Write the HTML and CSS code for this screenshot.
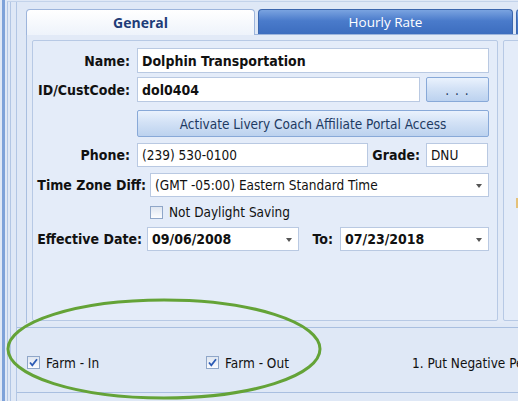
FILE: index.html
```html
<!DOCTYPE html>
<html>
<head>
<meta charset="utf-8">
<link rel="stylesheet" href="styles.css">
</head>
<body>
<div class="screen">
  <div class="strip"></div>
  <div class="frame">
    <div class="frame-in">
      <div class="main">
        <div class="tabctl">
          <div class="tabs">
            <div class="tab active">General</div>
            <div class="tab">Hourly Rate</div>
            <div class="tab stub"></div>
          </div>
          <div class="page">
            <div class="group">
              <div class="row r1">
                <span class="lbl w97">Name:</span>
                <div class="fld bold w352">Dolphin Transportation</div>
              </div>
              <div class="row r2">
                <span class="lbl w97">ID/CustCode:</span>
                <div class="fld bold w283">dol0404</div>
                <div class="btn dots">. . .</div>
              </div>
              <div class="row r3">
                <div class="btn wide">Activate Livery Coach Affiliate Portal Access</div>
              </div>
              <div class="row r4">
                <span class="lbl w97">Phone:</span>
                <div class="fld w231">(239) 530-0100</div>
                <span class="lbl grade">Grade:</span>
                <div class="fld w62">DNU</div>
              </div>
              <div class="row r5">
                <span class="lbl w113">Time Zone Diff:</span>
                <div class="fld combo w339">(GMT -05:00) Eastern Standard Time<span class="arrow"></span></div>
              </div>
              <div class="row r6">
                <span class="chk"></span>
                <span class="chktxt">Not Daylight Saving</span>
              </div>
              <div class="row r7">
                <span class="lbl w109">Effective Date:</span>
                <div class="fld combo bold w152">09/06/2008<span class="arrow"></span></div>
                <span class="lbl to">To:</span>
                <div class="fld combo bold w149">07/23/2018<span class="arrow"></span></div>
              </div>
            </div>
            <div class="group side"><span class="mark"></span></div>
          </div>
        </div>
        <div class="bottom">
          <span class="chk on"><svg viewBox="0 0 13 13" width="13" height="13"><path d="M3 6.5 L5.3 9.3 L10 3.2" fill="none" stroke="#2c5bb5" stroke-width="1.8"/></svg></span>
          <span class="chktxt fin">Farm - In</span>
          <span class="chk on"><svg viewBox="0 0 13 13" width="13" height="13"><path d="M3 6.5 L5.3 9.3 L10 3.2" fill="none" stroke="#2c5bb5" stroke-width="1.8"/></svg></span>
          <span class="chktxt fout">Farm - Out</span>
          <span class="chktxt note">1. Put Negative Pe</span>
        </div>
      </div>
    </div>
  </div>
  <svg class="circle" width="518" height="401" viewBox="0 0 518 401">
    <ellipse cx="164" cy="349" rx="156" ry="49" fill="none" stroke="#64a337" stroke-width="3"/>
  </svg>
</div>
</body>
</html>
```

FILE: styles.css
```css
* { box-sizing: border-box; }
html, body { margin: 0; padding: 0; }
body {
  width: 518px; height: 401px; overflow: hidden;
  background: #dfe8f6;
  font-family: "DejaVu Sans Condensed", "DejaVu Sans", sans-serif;
  font-size: 13.5px;
  color: #111;
}
.screen { position: relative; display: flex; width: 518px; height: 401px; overflow: hidden; }
.strip { width: 3px; margin-left: 2px; background: #7ea2d9; flex: none; }
.frame {
  flex: 1; margin-left: 2px; margin-top: 1px;
  border-left: 1px solid #b2c6e4; border-top: 1px solid #c3d3ea;
  padding-left: 2px;
}
.frame-in { height: 100%; border-left: 1px solid #b2c6e4; padding-left: 5px; }
.main { height: 100%; border-left: 1px solid #b2c6e4; padding-top: 7px; }
.tabctl { margin-left: 9px; }
.tabs { display: flex; height: 25px; }
.tab {
  width: 230px; height: 25px; border-radius: 4px 4px 0 0;
  display: flex; align-items: center; justify-content: center;
  font-family: "Open Sans", "DejaVu Sans", sans-serif; font-size: 13.5px;
  color: #fff;
  background: linear-gradient(#7aa3e0, #4a7bcb 45%, #3c6dbf);
  border: 1px solid #3b66ad; border-bottom: none;
  margin-right: 3px;
}
.tab.active {
  width: 229px; color: #1f3d78; font-weight: bold; font-size: 14px;
  background: linear-gradient(#ffffff, #eef3fb);
  border-color: #9db5dc; margin-right: 3px;
  position: relative; z-index: 1; height: 26px;
}
.tab:nth-child(2) { width: 255px; }
.tab.stub { width: 20px; }
.page {
  display: flex; gap: 5px;
  height: 289px;
  border-top: 1px solid #9db5dc; border-left: 1px solid #a9bfe0;
  padding: 5px 0 0 5px;
  background: #e2eaf7;
}
.group {
  flex: none; width: 466px; height: 281px;
  border: 1px solid #b7c9e5; border-radius: 2px;
  padding: 7px 0 0 0;
  background: #e4ecf9;
}
.group.side { width: 60px; position: relative; }
.mark { position: absolute; left: 12px; top: 157px; width: 4px; height: 10px; background: #e4c17a; }
.row { display: flex; align-items: center; height: 24px; }
.r1 { height: 25px; }
.r2 { height: 25px; margin-top: 4px; }
.r3 { height: 27px; margin-top: 8px; padding-left: 104px; }
.r4 { margin-top: 6px; }
.r5 { margin-top: 6px; }
.r6 { margin-top: 3px; padding-left: 117px; }
.r7 { margin-top: 3px; }
.lbl { font-weight: bold; font-size: 14px; text-align: right; flex: none; white-space: nowrap; }
.w97 { width: 97px; margin-right: 7px; }
.w113 { width: 113px; margin-right: 4px; }
.w109 { width: 109px; margin-right: 5px; }
.grade { width: 52px; margin-right: 6px; }
.to { width: 34px; margin-right: 7px; }
.fld {
  height: 100%; flex: none; position: relative;
  background: #fff; border: 1px solid #b9c9e2;
  display: flex; align-items: center; padding-left: 4px;
  white-space: nowrap; overflow: hidden;
}
.bold { font-weight: bold; font-size: 14px; }
.w352 { width: 352px; }
.w283 { width: 283px; }
.w231 { width: 231px; }
.w62 { width: 62px; }
.w339 { width: 339px; }
.w152 { width: 152px; }
.w149 { width: 149px; }
.arrow {
  position: absolute; right: 6px; top: 10px;
  width: 0; height: 0;
  border-left: 3.5px solid transparent; border-right: 3.5px solid transparent;
  border-top: 4px solid #555;
}
.btn {
  display: flex; align-items: center; justify-content: center;
  background: linear-gradient(#eaf2fd, #d3e2f6 45%, #bcd2ef);
  border: 1px solid #88a9d8; border-radius: 2px;
  color: #1d3a62; flex: none; height: 100%;
}
.dots { width: 63px; margin-left: 6px; letter-spacing: 1px; }
.wide { width: 352px; }
.chk {
  width: 13px; height: 13px; flex: none; display: inline-block;
  border: 1px solid #8fa6c8;
  background: linear-gradient(#dfe6f1, #fbfcfe);
  position: relative;
}
.chk svg { position: absolute; left: -1px; top: -1px; }
.chktxt { margin-left: 6px; white-space: nowrap; }
.bottom {
  margin-top: 4px; height: 66px;
  border-top: 1px solid #a9bfe0; border-bottom: 1px solid #a9bfe0;
  display: flex; align-items: center;
  padding: 5px 0 0 10px;
}
.fin { width: 160px; }
.fout { width: 181px; }
.circle { position: absolute; left: 0; top: 0; pointer-events: none; }
```
